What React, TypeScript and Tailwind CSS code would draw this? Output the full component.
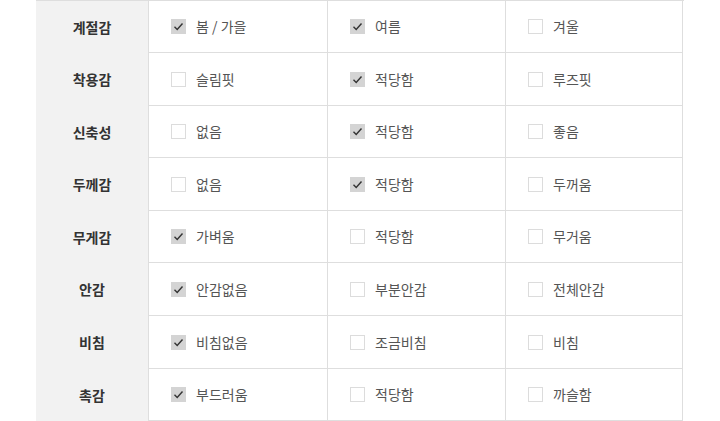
import React from 'react';

type Opt = { label: string; checked: boolean };
type Row = { title: string; h: string; opts: Opt[] };

const rows: Row[] = [
  { title: '계절감', h: 'h-[52px]', opts: [{ label: '봄 / 가을', checked: true }, { label: '여름', checked: true }, { label: '겨울', checked: false }] },
  { title: '착용감', h: 'h-[53px]', opts: [{ label: '슬림핏', checked: false }, { label: '적당함', checked: true }, { label: '루즈핏', checked: false }] },
  { title: '신축성', h: 'h-[52px]', opts: [{ label: '없음', checked: false }, { label: '적당함', checked: true }, { label: '좋음', checked: false }] },
  { title: '두께감', h: 'h-[53px]', opts: [{ label: '없음', checked: false }, { label: '적당함', checked: true }, { label: '두꺼움', checked: false }] },
  { title: '무게감', h: 'h-[52px]', opts: [{ label: '가벼움', checked: true }, { label: '적당함', checked: false }, { label: '무거움', checked: false }] },
  { title: '안감', h: 'h-[53px]', opts: [{ label: '안감없음', checked: true }, { label: '부분안감', checked: false }, { label: '전체안감', checked: false }] },
  { title: '비침', h: 'h-[53px]', opts: [{ label: '비침없음', checked: true }, { label: '조금비침', checked: false }, { label: '비침', checked: false }] },
  { title: '촉감', h: 'h-[52px]', opts: [{ label: '부드러움', checked: true }, { label: '적당함', checked: false }, { label: '까슬함', checked: false }] },
];

function Box({ checked }: { checked: boolean }) {
  if (checked) {
    return (
      <span className="w-[15px] h-[15px] bg-[#d4d4d4] flex items-center justify-center shrink-0">
        <svg width="11" height="11" viewBox="0 0 11 11" fill="none">
          <path d="M1.5 5.8 L4.2 8.5 L9.5 2.5" stroke="#333" strokeWidth="1.4" />
        </svg>
      </span>
    );
  }
  return <span className="w-[15px] h-[15px] border border-[#dcdcdc] bg-white shrink-0" />;
}

function App() {
  return (
    <div className="w-[720px] h-[421px] bg-white" style={{ fontFamily: '"Noto Sans CJK KR", "Noto Sans", sans-serif' }}>
      <div className="ml-[36px] w-[648px] border-t border-[#dedede]">
        {rows.map((row) => (
          <div key={row.title} className={`flex ${row.h}`}>
            <div className="w-[112px] bg-[#f2f2f2] flex items-center justify-center text-[14px] font-bold text-[#333]">
              {row.title}
            </div>
            {row.opts.map((opt, i) => (
              <div
                key={i}
                className={`${i === 0 ? 'w-[179px]' : 'w-[178px]'} border-l border-b border-[#dedede] ${i === 2 ? 'border-r' : ''} flex items-center pl-[22px] gap-[10px] text-[14px] text-[#555]`}
              >
                <Box checked={opt.checked} />
                <span>{opt.label}</span>
              </div>
            ))}
          </div>
        ))}
      </div>
    </div>
  );
}

export default App;
